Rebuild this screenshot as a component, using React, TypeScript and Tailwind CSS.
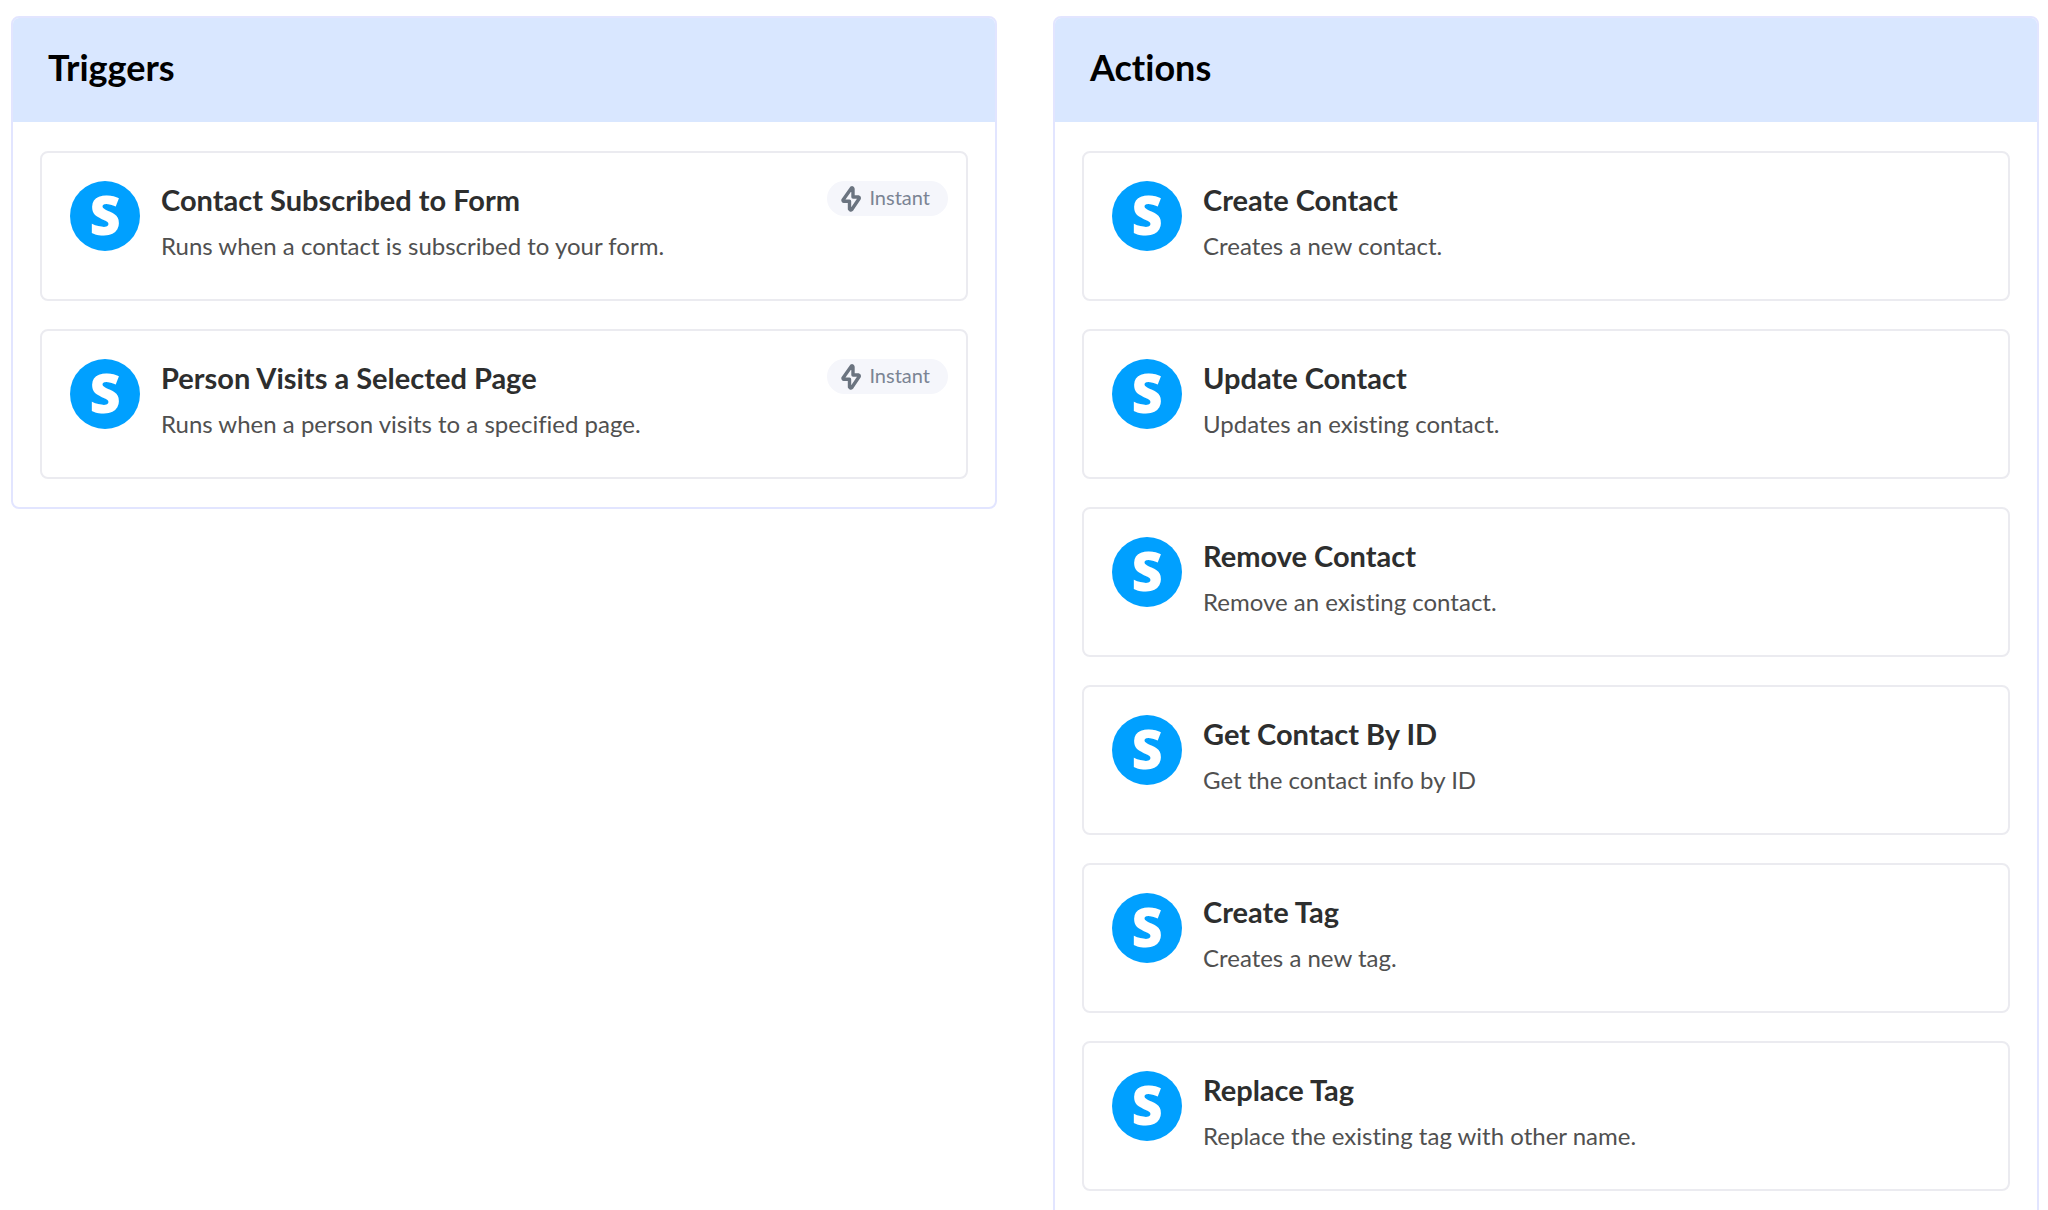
type Step = {
  title: string;
  description: string;
  instant?: boolean;
};

const triggers: Step[] = [
  {
    title: 'Contact Subscribed to Form',
    description: 'Runs when a contact is subscribed to your form.',
    instant: true,
  },
  {
    title: 'Person Visits a Selected Page',
    description: 'Runs when a person visits to a specified page.',
    instant: true,
  },
];

const actions: Step[] = [
  { title: 'Create Contact', description: 'Creates a new contact.' },
  { title: 'Update Contact', description: 'Updates an existing contact.' },
  { title: 'Remove Contact', description: 'Remove an existing contact.' },
  { title: 'Get Contact By ID', description: 'Get the contact info by ID' },
  { title: 'Create Tag', description: 'Creates a new tag.' },
  { title: 'Replace Tag', description: 'Replace the existing tag with other name.' },
];

function AppLogo() {
  return (
    <span
      aria-hidden="true"
      className="flex size-[70px] shrink-0 items-center justify-center rounded-full bg-[#00a0ff] pb-1 font-['Open_Sans',sans-serif] text-[54px] leading-[66px] font-extrabold text-white"
    >
      S
    </span>
  );
}

function InstantBadge() {
  return (
    <span className="-mr-[10px] flex h-[35px] shrink-0 items-center gap-2 rounded-full bg-[#f5f6fb] pr-[18px] pl-[14px] text-[20px] text-[#7b8494]">
      <svg
        viewBox="0 0 20 26"
        className="h-[26px] w-5"
        fill="none"
        stroke="#6b7480"
        strokeWidth="3.4"
        strokeLinejoin="round"
        strokeLinecap="round"
        aria-hidden="true"
      >
        <path d="M10.500 2 L2 14 Q1.800 15 3 15.200 H8.500 V23 Q9.500 24.800 10.800 23.500 L18.200 12.500 Q18.500 11.300 17.300 11 H12 V3 Q11.500 1.300 10.500 2 Z" />
      </svg>
      <span className="pb-1">Instant</span>
    </span>
  );
}

function StepCard({ title, description, instant }: Step) {
  return (
    <li className="flex min-h-[150px] items-start rounded-lg border-2 border-[#ebebf0] bg-white p-7">
      <AppLogo />
      <div className="ml-[21px] min-w-0 grow">
        <h3 className="text-[29px] leading-[38px] font-bold text-[#2d2e2e]">{title}</h3>
        <p className="mt-2 text-[24px] leading-[38px] text-[#505050]">{description}</p>
      </div>
      {instant && <InstantBadge />}
    </li>
  );
}

function Panel({ title, steps }: { title: string; steps: Step[] }) {
  return (
    <section className="overflow-hidden rounded-lg border-2 border-[#e2e5ff] bg-white">
      <h2 className="bg-[#d9e7ff] px-[35px] pt-[25px] pb-[31px] text-[36px] leading-[48px] font-bold text-black">
        {title}
      </h2>
      <ul className="flex flex-col gap-7 px-[27px] pt-[29px] pb-7">
        {steps.map((step) => (
          <StepCard key={step.title} {...step} />
        ))}
      </ul>
    </section>
  );
}

export default function App() {
  return (
    <main className="grid h-screen grid-cols-2 items-start gap-14 overflow-hidden bg-white pt-4 pr-[9px] pl-[11px] font-['Lato',sans-serif] [font-variant-ligatures:none]">
      <Panel title="Triggers" steps={triggers} />
      <Panel title="Actions" steps={actions} />
    </main>
  );
}
